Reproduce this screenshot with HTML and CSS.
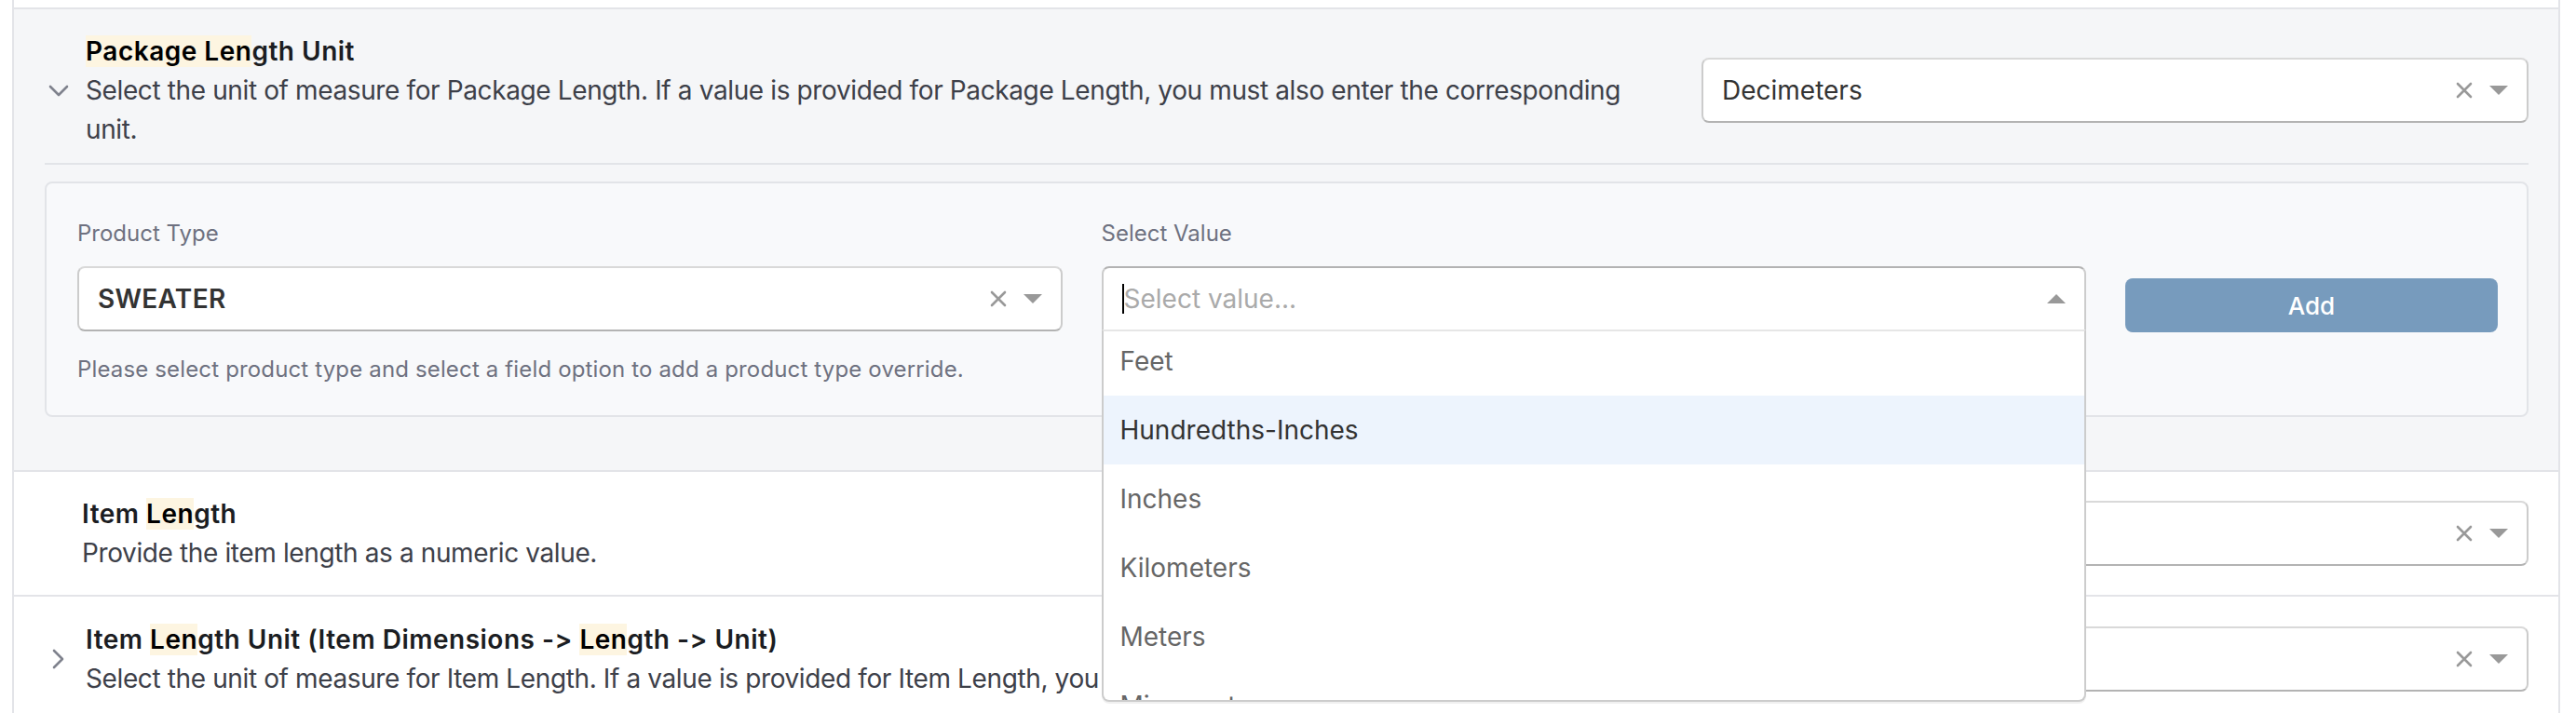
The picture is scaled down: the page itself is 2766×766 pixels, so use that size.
FILE: index.html
```html
<!DOCTYPE html>
<html lang="en">
<head>
<meta charset="utf-8">
<title>Package Length Unit</title>
<link rel="stylesheet" href="styles.css">
</head>
<body>
<div class="panel">
  <div class="prev-row"></div>

  <section class="field field--open">
    <div class="field-head">
      <span class="chev">
        <svg width="22" height="13" viewBox="0 0 22 13"><polyline points="2,2 11,11 20,2" fill="none" stroke="#7f828d" stroke-width="2.6" stroke-linecap="round" stroke-linejoin="round"/></svg>
      </span>
      <div class="field-text">
        <div class="field-title"><mark>Package Len</mark>gth Unit</div>
        <div class="field-desc">Select the unit of measure for Package Length. If a value is provided for Package Length, you must also enter the corresponding unit.</div>
      </div>
      <div class="field-control">
        <div class="rs">
          <div class="rs-value">Decimeters</div>
          <span class="rs-clear"><svg width="18" height="18" viewBox="0 0 18 18"><path d="M2 2 L16 16 M16 2 L2 16" stroke="#999" stroke-width="2.6" stroke-linecap="round"/></svg></span>
          <span class="rs-arrow-zone"><span class="rs-arrow"></span></span>
        </div>
      </div>
    </div>

    <div class="override">
      <div class="ov-col">
        <div class="ov-label">Product Type</div>
        <div class="rs">
          <div class="rs-value rs-value--strong">SWEATER</div>
          <span class="rs-clear"><svg width="18" height="18" viewBox="0 0 18 18"><path d="M2 2 L16 16 M16 2 L2 16" stroke="#999" stroke-width="2.6" stroke-linecap="round"/></svg></span>
          <span class="rs-arrow-zone"><span class="rs-arrow"></span></span>
        </div>
        <p class="ov-help">Please select product type and select a field option to add a product type override.</p>
      </div>
      <div class="ov-col">
        <div class="ov-label">Select Value</div>
        <div class="rs-wrap">
          <div class="rs rs--open">
            <div class="rs-value rs-placeholder"><span class="caret"></span>Select value...</div>
            <span class="rs-arrow-zone"><span class="rs-arrow rs-arrow--up"></span></span>
          </div>
          <div class="rs-menu">
            <div class="rs-list">
              <div class="rs-opt">Feet</div>
              <div class="rs-opt is-focused">Hundredths-Inches</div>
              <div class="rs-opt">Inches</div>
              <div class="rs-opt">Kilometers</div>
              <div class="rs-opt">Meters</div>
              <div class="rs-opt">Micrometers</div>
              <div class="rs-opt">Miles</div>
            </div>
          </div>
        </div>
      </div>
      <div class="ov-action">
        <button class="btn-add" type="button">Add</button>
      </div>
    </div>
  </section>

  <section class="field field--plain">
    <div class="field-head">
      <div class="field-text">
        <div class="field-title">Item <mark>Len</mark>gth</div>
        <div class="field-desc">Provide the item length as a numeric value.</div>
      </div>
      <div class="field-control">
        <div class="rs">
          <div class="rs-value"></div>
          <span class="rs-clear"><svg width="18" height="18" viewBox="0 0 18 18"><path d="M2 2 L16 16 M16 2 L2 16" stroke="#999" stroke-width="2.6" stroke-linecap="round"/></svg></span>
          <span class="rs-arrow-zone"><span class="rs-arrow"></span></span>
        </div>
      </div>
    </div>
  </section>

  <section class="field field--closed">
    <div class="field-head">
      <span class="chev">
        <svg width="14" height="22" viewBox="0 0 14 22"><polyline points="2,2 11,11 2,20" fill="none" stroke="#7f828d" stroke-width="2.6" stroke-linecap="round" stroke-linejoin="round"/></svg>
      </span>
      <div class="field-text">
        <div class="field-title">Item <mark>Len</mark>gth Unit (Item Dimensions -&gt; <mark>Len</mark>gth -&gt; Unit)</div>
        <div class="field-desc">Select the unit of measure for Item Length. If a value is provided for Item Length, you must also enter the corresponding unit.</div>
      </div>
      <div class="field-control">
        <div class="rs">
          <div class="rs-value"></div>
          <span class="rs-clear"><svg width="18" height="18" viewBox="0 0 18 18"><path d="M2 2 L16 16 M16 2 L2 16" stroke="#999" stroke-width="2.6" stroke-linecap="round"/></svg></span>
          <span class="rs-arrow-zone"><span class="rs-arrow"></span></span>
        </div>
      </div>
    </div>
  </section>
</div>
</body>
</html>
```

FILE: styles.css
```css
* { box-sizing: border-box; }

html, body {
  margin: 0;
  padding: 0;
  background: #ffffff;
  overflow: hidden;
}

body {
  width: 2766px;
  height: 766px;
  font-family: Inter, "Noto Sans", sans-serif;
  font-feature-settings: "calt" 0, "liga" 0;
  font-variant-ligatures: none;
  color: #333333;
}

.panel {
  margin-left: 13px;
  width: 2736px;
  border-left: 2px solid #e3e4e8;
  border-right: 2px solid #e3e4e8;
}

.prev-row {
  height: 8px;
  background: #ffffff;
}

.field {
  border-top: 2px solid #e3e4e8;
}

.field--open {
  background: #f5f6f8;
  padding-bottom: 57px;
}

.field-head {
  display: flex;
  align-items: center;
  padding: 24px 32px 24px 33px;
}

.field--open .field-head {
  margin: 0 32px 0 33px;
  padding: 24px 0 15px 0;
  border-bottom: 2px solid #e2e4e8;
}

.field--plain .field-head {
  padding-left: 73px;
}

.field--closed .field-head {
  padding-top: 25px;
}

.chev {
  flex: none;
  width: 30px;
  margin-right: 14px;
  display: flex;
  justify-content: center;
  align-items: center;
}

.field-text {
  flex: 1;
  min-width: 0;
  padding-right: 40px;
}

.field-title {
  font-size: 28px;
  line-height: 42px;
  font-weight: 600;
  letter-spacing: 0.5px;
  color: #1b1d22;
  white-space: nowrap;
}

.field-title mark {
  background: #fdf5e1;
  color: #000000;
}

.field-desc {
  font-size: 28px;
  line-height: 42px;
  letter-spacing: -0.38px;
  color: #3d4049;
}

.field-control {
  flex: none;
  width: 888px;
}

/* react-select like control */
.rs {
  position: relative;
  height: 70px;
  display: flex;
  align-items: center;
  background: #ffffff;
  border: 2px solid #cccccc;
  border-color: #d9d9d9 #cccccc #b3b3b3;
  border-radius: 8px;
  padding-left: 20px;
}

.rs-value {
  flex: 1;
  min-width: 0;
  font-size: 28px;
  color: #333333;
  white-space: nowrap;
  overflow: hidden;
}

.rs-value--strong {
  font-weight: 600;
  letter-spacing: 0.3px;
}

.rs-placeholder {
  color: #aaaaaa;
  display: flex;
  align-items: center;
}

.caret {
  display: inline-block;
  width: 2px;
  height: 32px;
  background: #000000;
}

.rs-clear {
  flex: none;
  width: 34px;
  display: flex;
  justify-content: center;
  align-items: center;
}

.rs-arrow-zone {
  flex: none;
  width: 50px;
  padding-right: 10px;
  display: flex;
  justify-content: center;
  align-items: center;
}

.rs-arrow {
  width: 0;
  height: 0;
  border-style: solid;
  border-width: 10px 10px 0 10px;
  border-color: #999999 transparent transparent transparent;
}

.rs-arrow--up {
  border-width: 0 10px 10px 10px;
  border-color: transparent transparent #999999 transparent;
}

.rs-wrap {
  position: relative;
}

.rs--open {
  border-color: #b3b3b3 #cccccc #d9d9d9;
  border-radius: 8px 8px 0 0;
}

.rs-menu {
  position: absolute;
  left: 0;
  right: 0;
  top: 100%;
  margin-top: -2px;
  height: 400px;
  overflow: hidden;
  background: #ffffff;
  border: 2px solid #cccccc;
  border-top-color: #e6e6e6;
  border-radius: 0 0 8px 8px;
  box-shadow: 0 2px 0 rgba(0, 0, 0, 0.06);
  z-index: 10;
}

.rs-list {
  margin-top: -5px;
}

.rs-opt {
  height: 74px;
  padding: 0 18px;
  display: flex;
  align-items: center;
  font-size: 28px;
  color: #666666;
}

.rs-opt.is-focused {
  background: #edf4fd;
  color: #333333;
}

/* product type override box */
.override {
  margin: 18px 32px 0 33px;
  background: #f8f9fb;
  border: 2px solid #e2e4e8;
  border-radius: 8px;
  padding: 37px 31px 32px 33px;
  display: grid;
  grid-template-columns: 1fr 1fr 400px;
  column-gap: 42px;
  align-items: start;
}

.ov-label {
  font-size: 24px;
  line-height: 34px;
  color: #6e7180;
  margin-bottom: 18px;
}

.ov-help {
  margin: 24px 0 0 0;
  font-size: 24px;
  line-height: 34px;
  letter-spacing: 0.15px;
  color: #6e7180;
}

.ov-action {
  padding-top: 65px;
}

.btn-add {
  display: block;
  width: 100%;
  height: 58px;
  border: none;
  border-radius: 8px;
  background: #779bbd;
  color: #ffffff;
  font-family: Inter, "Noto Sans", sans-serif;
  font-size: 26px;
  font-weight: 500;
}
```
